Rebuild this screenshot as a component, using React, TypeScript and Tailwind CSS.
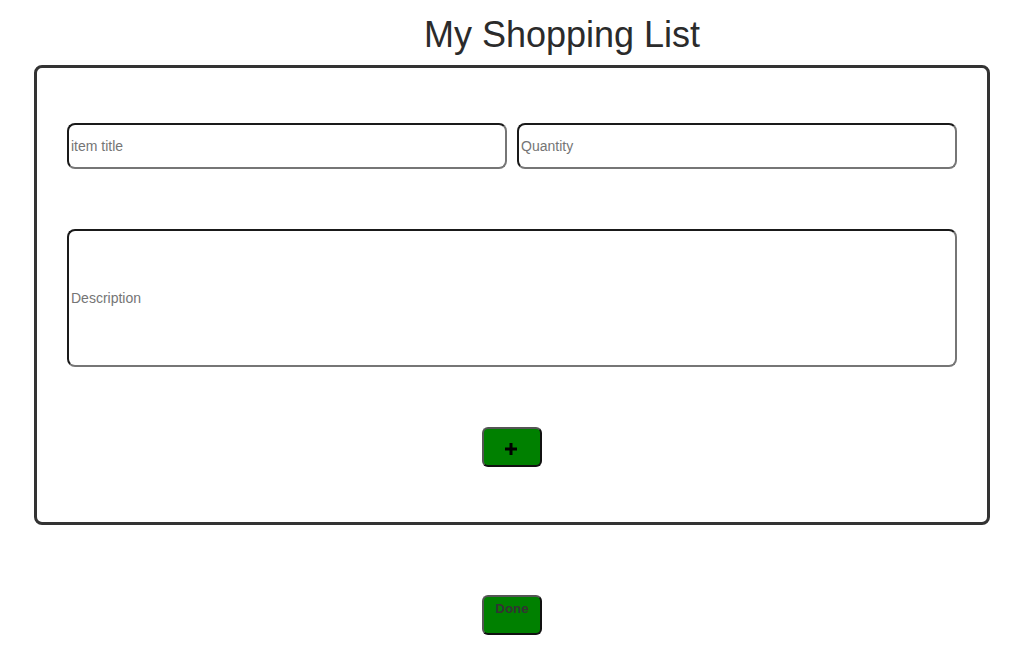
import React from "react";

export default function App() {
  const inputCls =
    "box-border border-2 border-solid border-t-[#1a1a1a] border-l-[#1a1a1a] border-r-[#767676] border-b-[#767676] rounded-[8px] px-[2px] text-[14px] text-[#222] placeholder:text-[#757575] outline-none bg-white";
  const btnCls =
    "box-border w-[60px] h-[40px] bg-[#008000] border-2 border-solid border-t-[#555] border-l-[#555] border-r-[#111] border-b-[#111] rounded-[6px] flex justify-center";
  return (
    <div className="w-[1023px] min-h-[657px] bg-white" style={{ fontFamily: '"Liberation Sans", Arial, sans-serif' }}>
      <h1 className="pt-[14px] pl-[101px] text-center text-[36px] leading-[41px] text-[#2b2b2b] font-normal">
        My Shopping List
      </h1>
      <div className="mt-[10px] ml-[34px] w-[956px] h-[460px] box-border border-[3px] border-solid border-[#333] rounded-[8px] px-[30px] pt-[55px] flex flex-col">
        <div className="flex gap-[10px]">
          <input className={`${inputCls} w-[440px] h-[46px]`} placeholder="item title" />
          <input className={`${inputCls} w-[440px] h-[46px]`} placeholder="Quantity" />
        </div>
        <input className={`${inputCls} mt-[60px] w-[890px] h-[138px]`} placeholder="Description" />
        <div className="mt-[60px] flex justify-center">
          <button className={`${btnCls} items-center pt-[3px] pr-[3px]`}>
            <svg width="12" height="12" viewBox="0 0 12 12">
              <rect x="0" y="4.5" width="12" height="3" fill="#000" />
              <rect x="4.5" y="0" width="3" height="12" fill="#000" />
            </svg>
          </button>
        </div>
      </div>
      <div className="mt-[70px] flex justify-center pl-[1px]">
        <button className={`${btnCls} items-start pt-[4px] text-[13.33px] font-bold text-[#333] leading-[16px]`}>
          Done
        </button>
      </div>
    </div>
  );
}
